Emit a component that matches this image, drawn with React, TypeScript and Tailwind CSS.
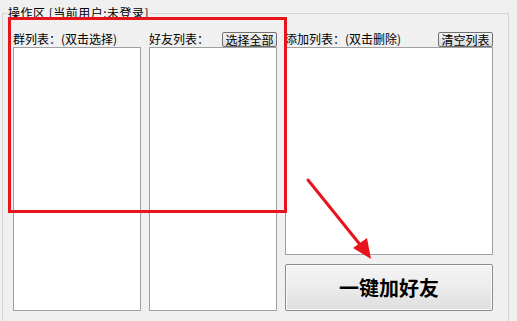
import React from 'react';

const font = { fontFamily: '"Noto Sans CJK SC", "Liberation Sans", sans-serif' };

const SmallButton: React.FC<{ label: string }> = ({ label }) => (
  <button className="h-[15px] w-[55px] flex items-center justify-center border border-[#707070] rounded-[2px] bg-gradient-to-b from-[#f4f4f4] to-[#dcdcdc] text-[12px] leading-none text-black">
    {label}
  </button>
);

const ListBox: React.FC<{ className: string }> = ({ className }) => (
  <div className={`bg-white border border-[#a0a0a0] ${className}`}></div>
);

const App: React.FC = () => {
  return (
    <div className="relative w-[517px] h-[321px] overflow-hidden bg-[#f0f0f0] text-black" style={font}>
      <div className="pt-[13px] pl-[2px]">
        <div className="relative w-[507px] h-[330px] border border-[#d4d4d4]">
          <div className="absolute -top-[9px] left-[4px] px-[1px] bg-[#f0f0f0] text-[12px] leading-[16px] tracking-[0.5px]">
            操作区 [当前用户:未登录]
          </div>

          <div className="flex gap-[8px] pl-[10px] pt-[17px]">
            {/* group list */}
            <div className="flex flex-col w-[128px]">
              <div className="h-[16px] text-[12px] leading-[16px] whitespace-nowrap">群列表：(双击选择)</div>
              <ListBox className="h-[264px]" />
            </div>

            {/* friend list */}
            <div className="flex flex-col w-[128px]">
              <div className="h-[16px] flex items-end justify-between">
                <span className="text-[12px] leading-[16px]">好友列表：</span>
                <SmallButton label="选择全部" />
              </div>
              <ListBox className="h-[264px]" />
            </div>

            {/* add list */}
            <div className="flex flex-col w-[208px]">
              <div className="h-[16px] flex items-end justify-between">
                <span className="text-[12px] leading-[16px] whitespace-nowrap">添加列表：(双击删除)</span>
                <SmallButton label="清空列表" />
              </div>
              <ListBox className="h-[208px]" />
              <button className="mt-[9px] h-[47px] border border-[#8c8c8c] rounded-[2px] bg-gradient-to-b from-[#f4f4f4] via-[#ececec] to-[#dedede] shadow-[inset_0_0_0_1px_#fcfcfc] text-[20px] font-bold">
                一键加好友
              </button>
            </div>
          </div>
        </div>
      </div>

      {/* annotation overlays */}
      <div className="absolute left-[8px] top-[17px] w-[279px] h-[196px] border-[3px] border-[#e8141c] pointer-events-none"></div>
      <svg className="absolute left-0 top-0 pointer-events-none" width="517" height="321">
        <line x1="308" y1="180" x2="362" y2="247" stroke="#e8141c" strokeWidth="3" strokeLinecap="round" />
        <polygon points="371,259 353,248 367,238" fill="#e8141c" />
      </svg>
    </div>
  );
};

export default App;
